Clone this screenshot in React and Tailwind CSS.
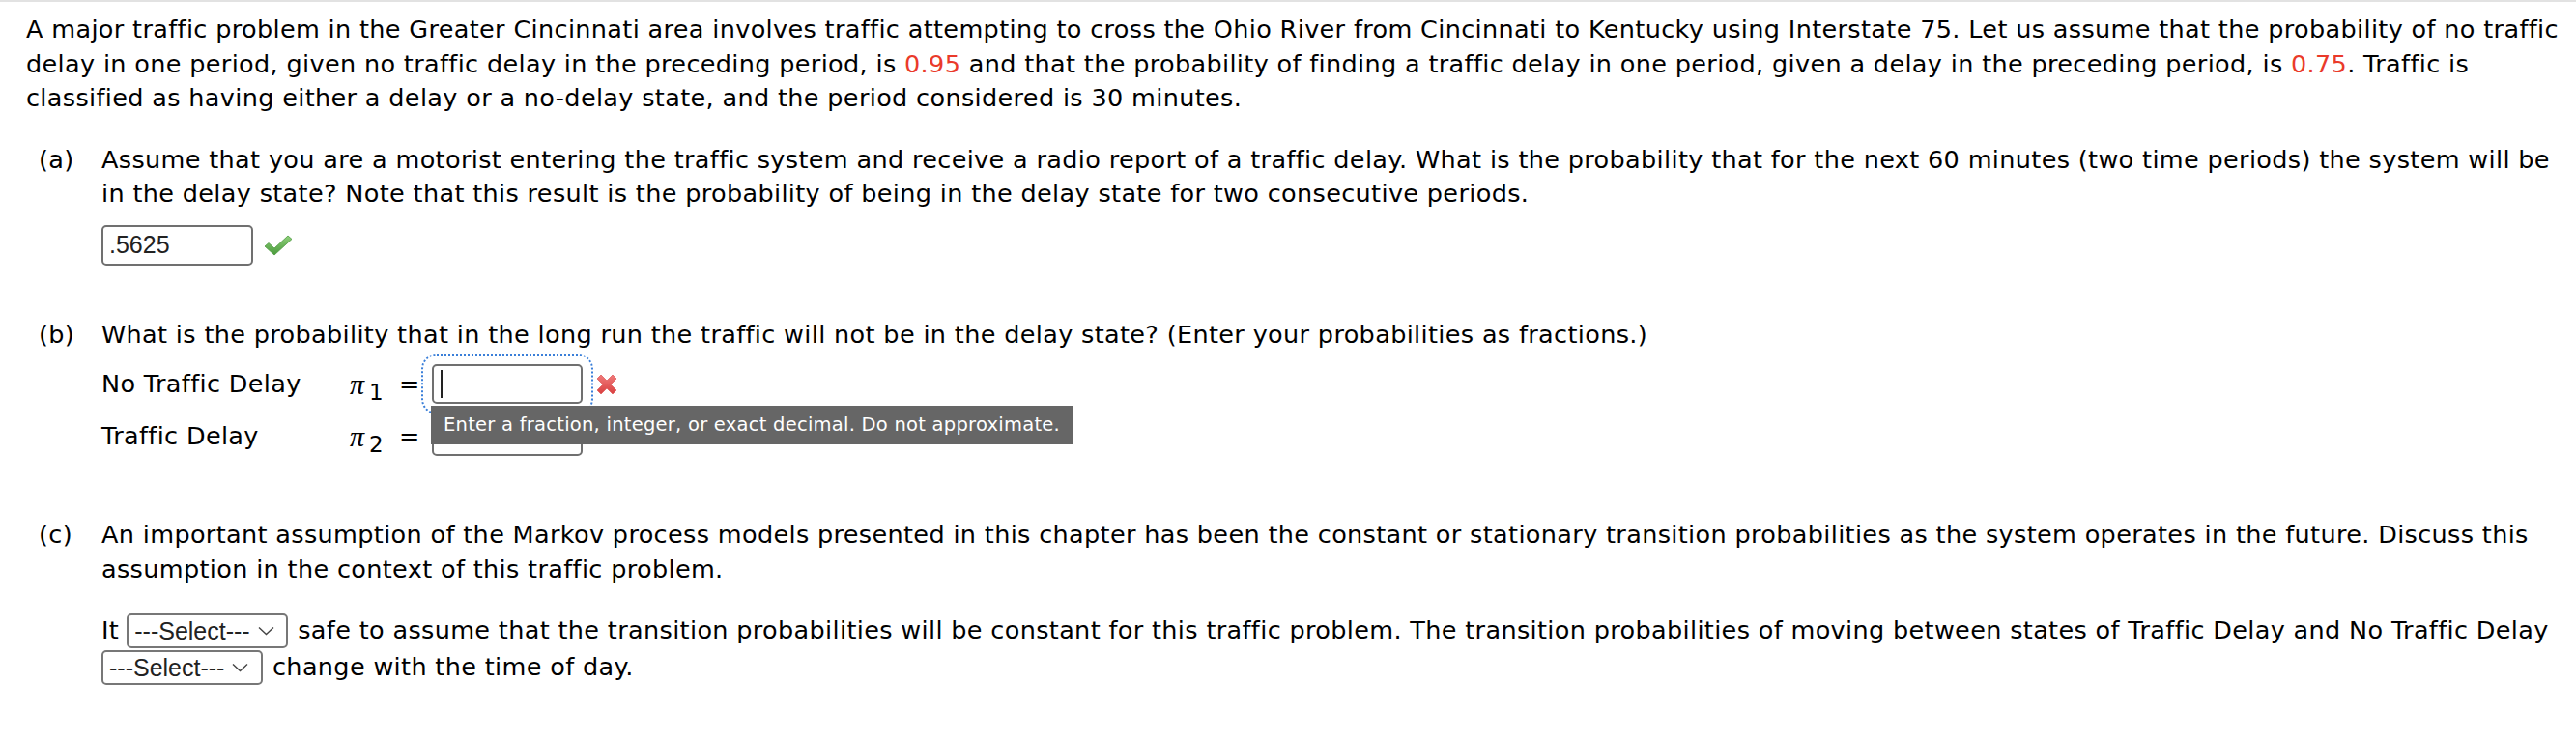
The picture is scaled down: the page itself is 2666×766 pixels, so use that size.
import React from "react";

function Check() {
  return (
    <svg width="31" height="24" viewBox="0 0 31 24" className="ml-[10px]">
      <defs>
        <linearGradient id="cg" x1="0" y1="0" x2="0" y2="1">
          <stop offset="0" stopColor="#8fd07a" />
          <stop offset="1" stopColor="#4a9a3c" />
        </linearGradient>
      </defs>
      <path d="M2 13 L6 9.5 L12 15 L26 2 L30 5.5 L12 22 Z" fill="url(#cg)" stroke="#4f9a43" strokeWidth="0.8" strokeLinejoin="round" />
    </svg>
  );
}

function RedX() {
  return (
    <svg width="26" height="26" viewBox="0 0 26 26" className="ml-[12px]">
      <defs>
        <linearGradient id="xg" x1="0" y1="0" x2="0" y2="1">
          <stop offset="0" stopColor="#f07a7a" />
          <stop offset="1" stopColor="#d94040" />
        </linearGradient>
      </defs>
      <path d="M3 7 L7 3 L13 9 L19 3 L23 7 L17 13 L23 19 L19 23 L13 17 L7 23 L3 19 L9 13 Z" fill="url(#xg)" stroke="#e06060" strokeWidth="0.8" strokeLinejoin="round" />
    </svg>
  );
}

function Select({ className = "" }) {
  return (
    <div className={"inline-flex items-center w-[167px] h-[36px] border-2 border-[#777777] rounded-[5px] pl-[6px] bg-white font-['Liberation_Sans'] text-[25px] leading-none tracking-normal text-[#222] " + className}>
      <span>---Select---</span>
      <svg width="17" height="10" viewBox="0 0 17 10" className="ml-[8px]">
        <polyline points="1,1.5 8.5,8.5 16,1.5" fill="none" stroke="#444" strokeWidth="1.4" />
      </svg>
    </div>
  );
}

function Red({ children }) {
  return <span className="text-[#ea3a2a]">{children}</span>;
}

export default function App() {
  return (
    <div className="w-[2666px] h-[766px] bg-white border-t-2 border-[#e2e2e2] font-['DejaVu_Sans',Verdana,sans-serif] text-[25.5px] leading-[35.5px] tracking-[0.35px] text-black whitespace-nowrap">
      <div className="pl-[27px] pt-[11px]">
        <p>
          A major traffic problem in the Greater Cincinnati area involves traffic attempting to cross the Ohio River from Cincinnati to Kentucky using Interstate 75. Let us assume that the probability of no traffic
          <br />
          delay in one period, given no traffic delay in the preceding period, is <Red>0.95</Red> and that the probability of finding a traffic delay in one period, given a delay in the preceding period, is <Red>0.75</Red>. Traffic is
          <br />
          classified as having either a delay or a no-delay state, and the period considered is 30 minutes.
        </p>

        {/* Part (a) */}
        <div className="mt-[28px] flex">
          <div className="w-[78px] pl-[13px] shrink-0">(a)</div>
          <div>
            <p>
              Assume that you are a motorist entering the traffic system and receive a radio report of a traffic delay. What is the probability that for the next 60 minutes (two time periods) the system will be
              <br />
              in the delay state? Note that this result is the probability of being in the delay state for two consecutive periods.
            </p>
            <div className="mt-[14px] flex items-center">
              <div className="w-[157px] h-[42px] border-2 border-[#707070] rounded-[5px] pl-[6px] flex items-center font-['Liberation_Sans'] text-[25px] tracking-normal text-[#222]">
                .5625
              </div>
              <Check />
            </div>
          </div>
        </div>

        {/* Part (b) */}
        <div className="mt-[54px] flex">
          <div className="w-[78px] pl-[13px] shrink-0">(b)</div>
          <div>
            <p>What is the probability that in the long run the traffic will not be in the delay state? (Enter your probabilities as fractions.)</p>
            <div className="mt-[13px] flex items-center h-[41px]">
              <div className="w-[257px]">No Traffic Delay</div>
              <span className="font-['Liberation_Serif'] italic text-[30px] w-[20px]">π</span>
              <span className="text-[23px] relative top-[9px] w-[31px]">1</span>
              <span className="w-[34px]">=</span>
              <div className="relative">
                <div className="w-[156px] h-[41px] border-2 border-[#707070] rounded-[5px] outline-2 outline-dotted outline-[#3a7fd9] outline-offset-[9px] flex items-center pl-[7px]">
                  <div className="w-[2px] h-[29px] bg-[#222]" />
                </div>
                <div className="absolute left-[-1px] top-[43px] w-[664px] h-[40px] bg-[#666666] text-white text-[19.5px] leading-[40px] tracking-[0.25px] pl-[13px] z-10">
                  Enter a fraction, integer, or exact decimal. Do not approximate.
                </div>
              </div>
              <RedX />
            </div>
            <div className="mt-[13px] flex items-center h-[41px]">
              <div className="w-[257px]">Traffic Delay</div>
              <span className="font-['Liberation_Serif'] italic text-[30px] w-[20px]">π</span>
              <span className="text-[23px] relative top-[9px] w-[31px]">2</span>
              <span className="w-[34px]">=</span>
              <div className="w-[156px] h-[41px] border-2 border-[#707070] rounded-[5px]" />
            </div>
          </div>
        </div>

        {/* Part (c) */}
        <div className="mt-[64px] flex">
          <div className="w-[78px] pl-[13px] shrink-0">(c)</div>
          <div>
            <p>
              An important assumption of the Markov process models presented in this chapter has been the constant or stationary transition probabilities as the system operates in the future. Discuss this
              <br />
              assumption in the context of this traffic problem.
            </p>
            <div className="mt-[28px] flex items-center h-[36px]">
              <span>It</span>
              <Select className="ml-[8px] mr-[10px]" />
              <span>safe to assume that the transition probabilities will be constant for this traffic problem. The transition probabilities of moving between states of Traffic Delay and No Traffic Delay</span>
            </div>
            <div className="mt-[2px] flex items-center h-[36px]">
              <Select className="mr-[10px]" />
              <span>change with the time of day.</span>
            </div>
          </div>
        </div>
      </div>
    </div>
  );
}
